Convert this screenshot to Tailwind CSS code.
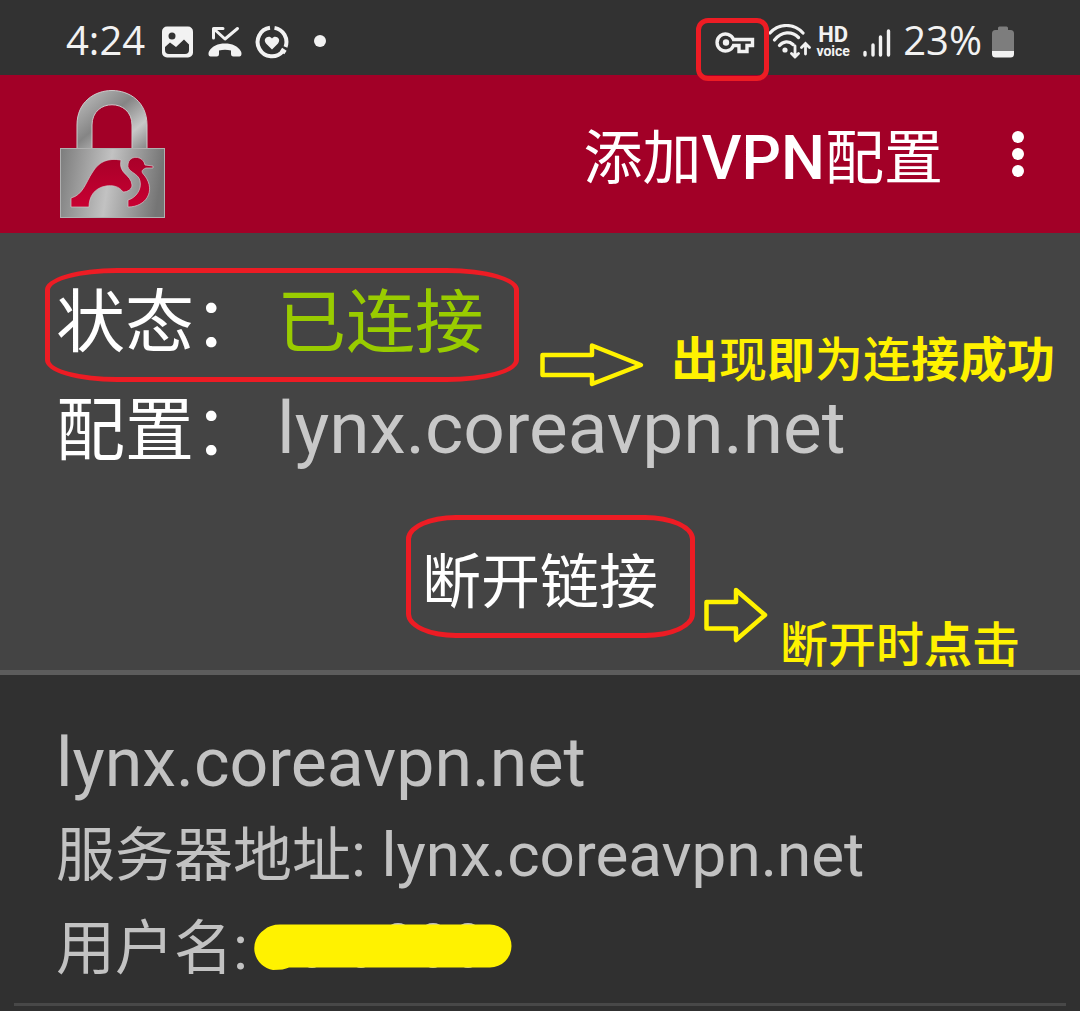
<!DOCTYPE html>
<html lang="zh-CN">
<head>
<meta charset="utf-8">
<meta name="viewport" content="width=device-width, initial-scale=1">
<title>VPN</title>
<script src="https://cdn.jsdelivr.net/npm/@tailwindcss/browser@4"></script>
</head>
<body class="min-h-screen bg-[#303030] text-white font-[Roboto,'Noto_Sans_CJK_SC',sans-serif]">

<!-- System status bar -->
<div class="relative flex h-[75px] items-center justify-between bg-[#323232] pt-1 pr-[66px] pl-[66px] text-[#f2f2f2]">
  <div class="flex items-center gap-4">
    <span class="font-['Open_Sans',sans-serif] text-[40px] leading-[48px]">4:24</span>
    <svg class="h-[32px] w-[32px] mt-1" viewBox="0 0 32 32"><rect x="1" y="0.500" width="31" height="31" rx="5" fill="currentColor"/><circle cx="11" cy="10" r="3.500" fill="#323232"/><path d="M4 21l5-4.500 6 4.500 8-7.500 5 5v5.500q0 4-4 4H8q-4 0-4-4z" fill="#323232"/></svg>
    <svg class="-ml-0.5 h-[32px] w-[36px] mt-1" viewBox="0 0 36 32" fill="none" stroke="currentColor"><path d="M6.500 12V2.500H16M7 3l11 10L30.500 2.500" stroke-width="3" stroke-linecap="round" stroke-linejoin="round"/><path d="M2 25.500C5 20 11 17.500 18 17.500s13 2.500 16 8c1 2 .5 5-1.500 5h-6c-2 0-2.500-1-2.500-3v-3c-4-1-8-1-12 0v3c0 2-.5 3-2.500 3h-6c-2 0-2.500-3-1.500-5z" fill="currentColor" stroke="none"/></svg>
    <svg class="-ml-1 h-[34px] w-[34px] mt-1" viewBox="0 0 34 34" fill="none" stroke="currentColor" stroke-width="4"><path d="M15 2.800A14.300 14.300 0 1 0 28 26M19.500 2.900A14.300 14.300 0 0 1 30.500 22M26 24.500l4.500 3"/><path d="M17 24.500l-6-6c-4-5 3-9 6-5 3-4 10 0 6 5z" fill="currentColor" stroke="none"/></svg>
    <svg class="ml-2 h-[12px] w-[14px] mt-0.5" viewBox="0 0 14 12"><circle cx="7" cy="6" r="6" fill="currentColor"/></svg>
  </div>
  <div class="flex items-center">
    <svg class="h-[24px] w-[40px] mt-1.5 mr-[14px]" viewBox="0 0 40 24" fill="none" stroke="currentColor" stroke-width="3.400"><path d="M18.500 8.500A8.500 8.500 0 1 0 18.500 14.500H24V20.500H32V14.500H37.500V8.500Z" stroke-linejoin="miter"/><circle cx="11" cy="11.500" r="3.200" fill="currentColor" stroke="none"/></svg>
    <svg class="h-[36px] w-[42px] mt-1" viewBox="0 0 42 36" fill="none" stroke="currentColor" stroke-width="3.200"><path d="M1 9C10-1 25-1 34 9M5.500 16C13 7 23 7 29.500 13.500M10.500 21.500C14 17 20 16.500 24 20.500" stroke-linecap="round"/><circle cx="16" cy="26" r="2.600" fill="currentColor" stroke="none"/><path d="M26 22v11M22.500 29.500L26 33l3.500-3.500M36.500 30V19.500M32.500 23.500l4-4 4 4" stroke-width="2.800" stroke-linecap="round"/></svg>
    <div class="mt-1 ml-1 flex w-[36px] flex-col items-center font-bold">
      <span class="text-[22px] leading-[18px]">HD</span>
      <span class="text-[14px] leading-[14px]">voice</span>
    </div>
    <svg class="ml-3 h-[30px] w-[28px] mt-1.5" viewBox="0 0 28 30" stroke="currentColor" stroke-width="3.400" stroke-linecap="round"><path d="M2 24.500V27M10 17V27M17.500 9V27M25.500 3V27"/></svg>
    <span class="ml-[12px] font-['Open_Sans',sans-serif] text-[40px] leading-[48px]">23%</span>
    <svg class="ml-[10px] h-[32px] w-[22px] mt-1" viewBox="0 0 22 32"><path d="M6 4V2q0-1.500 1.500-1.500h7Q16 .5 16 2v2h2.500Q22 4 22 7.500V25H0V7.500Q0 4 3.500 4z" fill="#7d7d7d"/><path d="M0 25h22v3q0 3.500-3.500 3.500h-15Q0 31.500 0 28z" fill="currentColor"/></svg>
  </div>
  <div class="absolute top-[18px] right-[311px] z-10 h-[63px] w-[73px] rounded-xl border-[5px] border-[#ed1c24]"></div>
</div>

<!-- App bar -->
<header class="flex h-[158px] items-center justify-between bg-[#a20027] pr-[56px] pl-[58px]">
  <svg class="h-[132px] w-[108px]" viewBox="0 0 108 132" role="img" aria-label="VPN">
    <defs>
      <linearGradient id="body" x1="0" y1="0" x2="1" y2="0.100"><stop offset="0" stop-color="#7c7c7c"/><stop offset=".5" stop-color="#c2c2c2"/><stop offset="1" stop-color="#757575"/></linearGradient>
      <linearGradient id="shackle" x1="0" y1="0" x2="1" y2="1"><stop offset="0" stop-color="#c4c4c4"/><stop offset=".45" stop-color="#858585"/><stop offset=".75" stop-color="#c8c8c8"/><stop offset="1" stop-color="#858585"/></linearGradient>
      <linearGradient id="bird" x1="0" y1="0" x2="0" y2="1"><stop offset="0" stop-color="#a90029"/><stop offset="1" stop-color="#c80032"/></linearGradient>
    </defs>
    <path d="M19 61V37C19-9 89-9 89 37V61H74V37C74 10 34 10 34 37V61Z" fill="url(#shackle)" stroke="#ccc" stroke-width="1"/>
    <rect x="2.500" y="60.500" width="104" height="69" fill="url(#body)" stroke="#b0b0b0"/>
    <path d="M13 119V110C25 107 28 94 34 85C41 73 50 70 63 72C60 86 73 86 74 97C74 101 70 104 65 104C61 98 54 97 48 98C36 100 31 109 31 119Z" fill="url(#bird)" stroke="#ccc" stroke-width=".7"/>
    <path d="M70 76C71 68 82 67 86 74L87 77L95 78V80H88C83 82 83 84 87 88C98 103 88 119 70 119V112C78 110 84 101 82 93C81 85 68 84 70 76Z" fill="url(#bird)" stroke="#ccc" stroke-width=".7"/>
  </svg>
  <div class="flex items-center gap-[69px]">
    <h1 class="pt-2 text-[62px] leading-[80px]"><span class="text-[59px]">添加</span><span class="font-medium">VPN</span><span class="text-[59px]">配置</span></h1>
    <button type="button" aria-label="菜单" class="flex w-[12px] flex-col items-center gap-[5px]">
      <span class="size-3 rounded-full bg-white"></span><span class="size-3 rounded-full bg-white"></span><span class="size-3 rounded-full bg-white"></span>
    </button>
  </div>
</header>

<!-- Connection state -->
<section class="relative border-b-[5px] border-[#5c5c5c] bg-[#444] pt-[33px] pb-8">
  <dl class="pl-[56px]">
    <div class="flex h-[108px] items-center gap-[14px]">
      <dt class="pt-2 text-[69px] leading-[100px]">状态：</dt>
      <dd class="pt-2 text-[69px] leading-[100px] text-[#99cc00]">已连接</dd>
    </div>
    <div class="flex h-[108px] items-center gap-[14px]">
      <dt class="pt-2 text-[69px] leading-[100px]">配置：</dt>
      <dd class="text-[73px] leading-[108px] text-[#c8c8c8]">lynx.coreavpn.net</dd>
    </div>
  </dl>
  <div class="mt-[33px] flex justify-center pl-5">
    <button type="button" class="h-[123px] w-[289px] rounded-[50px/24px] border-[5px] border-[#ed1c24] pt-3 pr-5 text-[59px] leading-[80px]">断开链接</button>
  </div>

  <!-- Callouts -->
  <div class="absolute top-[35px] left-[45px] h-[114px] w-[474px] rounded-[72px/22px] border-[5px] border-[#ed1c24]"></div>
  <div class="absolute top-[98px] left-[539px] flex items-center gap-[26px] text-[#fff200]">
    <svg class="mt-2 h-[46px] w-[106px]" viewBox="0 0 106 46" fill="none" stroke="currentColor" stroke-width="4.500"><path d="M3.500 13H53V3.500L102 23 53 42V33H3.500Z" stroke-linejoin="round"/></svg>
    <p class="text-[48px] leading-[60px]"><span class="font-bold">出</span><span class="font-medium">现</span><span class="font-bold">即</span><span class="font-medium">为连</span><span class="font-bold">接成功</span></p>
  </div>
  <div class="absolute top-[353px] left-[703px] flex items-start gap-[11px] text-[#fff200]">
    <svg class="h-[57px] w-[66px]" viewBox="0 0 66 57" fill="none" stroke="currentColor" stroke-width="4.500"><path d="M3.500 16H33V4L62 29 33 54V42.500H3.500Z" stroke-linejoin="round"/></svg>
    <p class="mt-[30px] text-[48px] leading-[60px] font-medium">断开时<span class="font-bold">点</span>击</p>
  </div>
</section>

<!-- Saved profile -->
<main class="px-[14px]">
  <article class="border-b-[3px] border-[#484848] pt-[42px] pb-2 pl-[42px] text-[62px] leading-[92px] text-[#c2c2c2]">
    <h2 class="text-[68px] leading-[92px]">lynx.coreavpn.net</h2>
    <p><span class="text-[59px]">服务器地址</span>: lynx.coreavpn.net</p>
    <p class="flex items-center"><span><span class="text-[59px]">用户名</span>:</span>
      <svg class="mb-1 ml-0.5 h-[50px] w-[262px]" viewBox="0 0 262 50" role="img" aria-label="已遮盖"><g fill="#c2c2c2"><ellipse cx="148" cy="6" rx="9" ry="5"/><ellipse cx="183" cy="6" rx="9" ry="5"/><ellipse cx="218" cy="6" rx="9" ry="5"/><ellipse cx="62" cy="42" rx="7" ry="4"/><ellipse cx="111" cy="42" rx="7" ry="4"/><ellipse cx="183" cy="42" rx="7" ry="4"/><ellipse cx="218" cy="42" rx="7" ry="4"/></g><path d="M30 2.500H240a21.500 21.500 0 0 1 0 43H39Q34 48 23 48a22 22 0 0 1-9-40Q20 2.500 30 2.500Z" fill="#fff200"/></svg>
    </p>
  </article>
</main>
</body>
</html>
